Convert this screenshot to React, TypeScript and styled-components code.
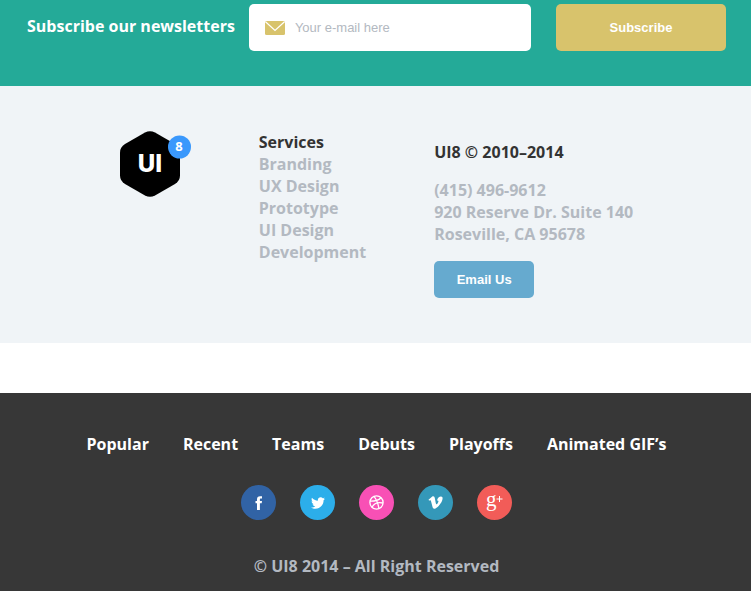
import React from 'react';
import styled, { createGlobalStyle } from 'styled-components';
import { FaTwitter } from 'react-icons/fa';

const GlobalStyle = createGlobalStyle`
  *, *::before, *::after { box-sizing: border-box; }
  body {
    margin: 0;
    background: #fff;
    font: 700 16px/22px "Open Sans", "Noto Sans", sans-serif;
    color: #333;
  }
`;

const Newsletter = styled.form`
  display: flex;
  padding: 4px 25px 35px 27px;
  background: #24aa98;
`;

const NewsletterLabel = styled.label`
  padding-top: 11px;
  margin-right: 14px;
  color: #fff;
  white-space: nowrap;
`;

const EmailField = styled.div`
  display: flex;
  align-items: center;
  gap: 10px;
  flex: 1;
  min-width: 0;
  height: 47px;
  padding: 0 16px;
  border-radius: 5px;
  background: #fff;
`;

const EmailInput = styled.input`
  flex: 1;
  min-width: 0;
  height: 100%;
  padding: 0;
  border: 0;
  outline: 0;
  background: transparent;
  font: 13px "Liberation Sans", Arial, sans-serif;
  color: #333;
  &::placeholder { color: #b3b9c1; opacity: 1; }
`;

const Button = styled.button<{ $tone: 'gold' | 'blue' }>`
  width: ${(p) => (p.$tone === 'gold' ? '170px' : '100px')};
  height: ${(p) => (p.$tone === 'gold' ? '47px' : '37px')};
  padding: 0;
  border: 0;
  border-radius: 5px;
  background: ${(p) => (p.$tone === 'gold' ? '#d8c36c' : '#66aacf')};
  color: #fff;
  font: bold 13px "Liberation Sans", Arial, sans-serif;
  cursor: pointer;
`;

const SubscribeButton = styled(Button)`
  flex: none;
  margin-left: 25px;
`;

const Company = styled.section`
  display: flex;
  justify-content: center;
  gap: 68px;
  padding: 45px 0 45px 2px;
  background: #f0f4f7;
`;

const Logo = styled.svg`
  display: block;
  flex: none;
`;

const Heading = styled.h2`
  margin: 0;
  font-size: 16px;
  font-weight: 700;
  line-height: 22px;
  color: #333;
`;

const ServiceList = styled.ul`
  margin: 0;
  padding: 0;
  list-style: none;
`;

const MutedLink = styled.a`
  color: #b3b9c1;
  text-decoration: none;
`;

const Contact = styled.div`
  padding-top: 10px;
`;

const Address = styled.address`
  margin: 16px 0;
  font-style: normal;
  color: #b3b9c1;
`;

const Footer = styled.footer`
  display: flex;
  flex-direction: column;
  align-items: center;
  margin-top: 50px;
  padding: 40px 0 14px 2px;
  background: #373737;
`;

const Nav = styled.nav`
  display: flex;
  gap: 34px;
`;

const NavLink = styled.a`
  color: #fff;
  text-decoration: none;
`;

const Socials = styled.div`
  display: flex;
  gap: 24px;
  margin: 30px 0 35px;
`;

const SocialLink = styled.a<{ $color: string }>`
  display: flex;
  align-items: center;
  justify-content: center;
  width: 35px;
  height: 35px;
  border-radius: 50%;
  background: ${(p) => p.$color};
  color: #fff;
`;

const Copyright = styled.p`
  margin: 0;
  color: #b3b9c1;
`;

const EnvelopeIcon = () => (
  <svg width="20" height="14" viewBox="0 0 20 14" aria-hidden="true">
    <rect width="20" height="14" rx="1.5" fill="#d8c36c" />
    <path d="M0.5 0.8 10 9.5 19.5 0.8" fill="none" stroke="#fff" strokeWidth="1.2" />
  </svg>
);

const FacebookIcon = () => (
  <svg width="8" height="14" viewBox="0 0 8 14" fill="#fff" aria-hidden="true">
    <path d="M2 14V7.300H.5V4.900H2V3.400C2 1.300 3 .2 5.100.2H7V2.600H5.800C5 2.600 4.900 2.900 4.900 3.600V4.900H7L6.700 7.300H4.900V14Z" />
  </svg>
);

const VimeoIcon = () => (
  <svg width="15" height="13" viewBox="0 0 15 13" fill="#fff" aria-hidden="true">
    <path d="M.5 3.700 4 .8C5.600-.2 6.500.6 6.900 2.500L7.700 6.800C8.100 8.600 8.600 8.800 9.500 7.400 10.700 5.500 11 4.300 9 4.600 9.600 1.800 11.100.4 13 .4 14.700.5 14.900 2 14.300 4 13.400 7 10.400 11 7.500 12.500 5.700 13.200 4.900 12.400 4.400 10.500L3.100 5.500C2.800 4.300 2.500 3.900 1.200 4.700Z" />
  </svg>
);

const DribbbleIcon = () => (
  <svg width="15" height="15" viewBox="0 0 15 15" fill="none" stroke="#fff" strokeWidth="1.3" aria-hidden="true">
    <circle cx="7.5" cy="7.5" r="6.6" />
    <path d="M5 1.4C7.3 4.2 9 8 9.900 13.5M1 6.2c4.4.1 8.300-.6 10.900-3.500M3 12.300C5 8.400 9 6.900 14 8" />
  </svg>
);

const GooglePlusIcon = () => (
  <svg width="35" height="35" viewBox="0 0 35 35" fill="#fff" aria-hidden="true">
    <text x="9" y="21" fontFamily="Liberation Serif, serif" fontWeight="400" fontSize="21">g</text>
    <path d="M22.500 11v6M19.500 14h6" stroke="#fff" strokeWidth="1" />
  </svg>
);

const services = ['Branding', 'UX Design', 'Prototype', 'UI Design', 'Development'];
const sections = ['Popular', 'Recent', 'Teams', 'Debuts', 'Playoffs', 'Animated GIF’s'];
const socials = [
  { name: 'Facebook', color: '#3163a5', icon: <FacebookIcon /> },
  { name: 'Twitter', color: '#2caeea', icon: <FaTwitter size={14} /> },
  { name: 'Dribbble', color: '#f850b5', icon: <DribbbleIcon /> },
  { name: 'Vimeo', color: '#3498b9', icon: <VimeoIcon /> },
  { name: 'Google Plus', color: '#f25c58', icon: <GooglePlusIcon /> },
];

export default function App() {
  return (
    <>
      <GlobalStyle />
      <Newsletter onSubmit={(e) => e.preventDefault()}>
        <NewsletterLabel htmlFor="email">Subscribe our newsletters</NewsletterLabel>
        <EmailField>
          <EnvelopeIcon />
          <EmailInput id="email" type="email" placeholder="Your e-mail here" />
        </EmailField>
        <SubscribeButton $tone="gold" type="submit">Subscribe</SubscribeButton>
      </Newsletter>
      <Company>
        <Logo width="71" height="66" viewBox="0 0 71 66" role="img" aria-label="UI8">
          <path d="M25 1.500Q30 -1.200 35 1.500L55 13Q60 16 60 21.500V44.500Q60 50 55 53L35 64.500Q30 67.200 25 64.500L5 53Q0 50 0 44.500V21.500Q0 16 5 13Z" fill="#000" />
          <text x="30" y="41" textAnchor="middle" fill="#fff" fontFamily="Inter, sans-serif" fontWeight="800" fontSize="24">UI</text>
          <circle cx="59.500" cy="16" r="11.500" fill="#3a98fc" />
          <text x="59" y="20" textAnchor="middle" fill="#fff" fontFamily="Open Sans, sans-serif" fontWeight="700" fontSize="13">8</text>
        </Logo>
        <div>
          <Heading>Services</Heading>
          <ServiceList>
            {services.map((s) => (
              <li key={s}><MutedLink href="#">{s}</MutedLink></li>
            ))}
          </ServiceList>
        </div>
        <Contact>
          <Heading>UI8 © 2010–2014</Heading>
          <Address>
            (415) 496-9612<br />
            920 Reserve Dr. Suite 140<br />
            Roseville, CA 95678
          </Address>
          <Button $tone="blue" type="button">Email Us</Button>
        </Contact>
      </Company>
      <Footer>
        <Nav>
          {sections.map((s) => <NavLink key={s} href="#">{s}</NavLink>)}
        </Nav>
        <Socials>
          {socials.map((s) => (
            <SocialLink key={s.name} href="#" aria-label={s.name} $color={s.color}>{s.icon}</SocialLink>
          ))}
        </Socials>
        <Copyright>© UI8 2014 – All Right Reserved</Copyright>
      </Footer>
    </>
  );
}
